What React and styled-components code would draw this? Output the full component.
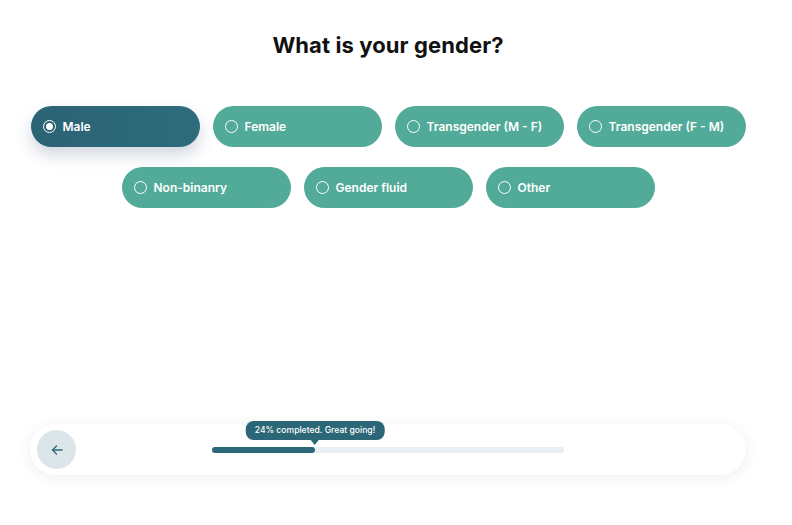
import React from 'react';
import styled, { createGlobalStyle } from 'styled-components';

const GlobalStyle = createGlobalStyle`
  html, body {
    margin: 0;
    padding: 0;
    background: #ffffff;
    font-family: "Inter", "Noto Sans", sans-serif;
  }
`

const Page = styled.div`
  width: 776px;
  height: 525px;
  display: flex;
  flex-direction: column;
  align-items: center;
  box-sizing: border-box;
  padding: 32px 30px 50px;
`

const Title = styled.h1`
  margin: 0;
  font-size: 22px;
  font-weight: 700;
  color: #111111;
  letter-spacing: 0.1px;
`

const Options = styled.div`
  margin-top: 48px;
  display: flex;
  flex-wrap: wrap;
  justify-content: center;
  gap: 20px 13px;
  width: 716px;
`

const Option = styled.div`
  width: 169px;
  height: 41px;
  box-sizing: border-box;
  border-radius: 21px;
  display: flex;
  align-items: center;
  gap: 7px;
  padding-left: 12px;
  color: #ffffff;
  font-size: 12px;
  font-weight: 600;
  background: ${({ $active }) => ($active ? 'linear-gradient(90deg, #2a6374, #2e6b7b)' : '#52ab98')};
  box-shadow: ${({ $active }) => ($active ? '0 8px 16px rgba(44, 70, 110, 0.22)' : 'none')};
  cursor: pointer;
`

const Radio = styled.span`
  width: 13px;
  height: 13px;
  box-sizing: border-box;
  border-radius: 50%;
  border: 1px solid #ffffff;
  display: flex;
  align-items: center;
  justify-content: center;

  &::after {
    content: '';
    width: 7px;
    height: 7px;
    border-radius: 50%;
    background: #ffffff;
    display: ${({ $checked }) => ($checked ? 'block' : 'none')};
  }
`

const Bar = styled.div`
  margin-top: auto;
  width: 716px;
  height: 51px;
  box-sizing: border-box;
  border-radius: 26px;
  background: #ffffff;
  box-shadow: 0 2px 14px rgba(30, 50, 80, 0.09);
  display: flex;
  align-items: center;
  padding-left: 7px;
`

const BackButton = styled.button`
  width: 39px;
  height: 39px;
  border-radius: 50%;
  border: none;
  padding: 0;
  background: #dce6e9;
  color: #2c6777;
  display: flex;
  align-items: center;
  justify-content: center;
  cursor: pointer;
`

const Track = styled.div`
  position: relative;
  margin-left: 136px;
  width: 352px;
  height: 6px;
  border-radius: 3px;
  background: #e8eef1;
`

const Fill = styled.div`
  height: 100%;
  border-radius: 3px;
  background: #2c6777;
`

const Tooltip = styled.div`
  position: absolute;
  bottom: 13px;
  transform: translateX(-50%);
  background: #2c6777;
  color: #ffffff;
  font-size: 8.6px;
  font-weight: 500;
  white-space: nowrap;
  height: 19px;
  line-height: 19px;
  padding: 0 9px;
  border-radius: 8px;

  &::after {
    content: '';
    position: absolute;
    left: 50%;
    top: 100%;
    margin-left: -4px;
    border-left: 4px solid transparent;
    border-right: 4px solid transparent;
    border-top: 5px solid #2c6777;
  }
`

const options = [
  'Male',
  'Female',
  'Transgender (M - F)',
  'Transgender (F - M)',
  'Non-binanry',
  'Gender fluid',
  'Other',
]

function App() {
  const selected = 'Male'
  const fill = 103

  return (
    <>
      <GlobalStyle />
      <Page>
        <Title>What is your gender?</Title>
        <Options>
          {options.map((o) => (
            <Option key={o} $active={o === selected}>
              <Radio $checked={o === selected} />
              {o}
            </Option>
          ))}
        </Options>
        <Bar>
          <BackButton aria-label="Back">
            <svg width="12" height="12" viewBox="0 0 12 12" fill="none" stroke="currentColor" strokeWidth="1.3" strokeLinecap="round" strokeLinejoin="round">
              <path d="M11 6H1.5" />
              <path d="M5.5 2L1.5 6L5.5 10" />
            </svg>
          </BackButton>
          <Track>
            <Fill style={{ width: fill }} />
            <Tooltip style={{ left: fill }}>24% completed. Great going!</Tooltip>
          </Track>
        </Bar>
      </Page>
    </>
  )
}

export default App
